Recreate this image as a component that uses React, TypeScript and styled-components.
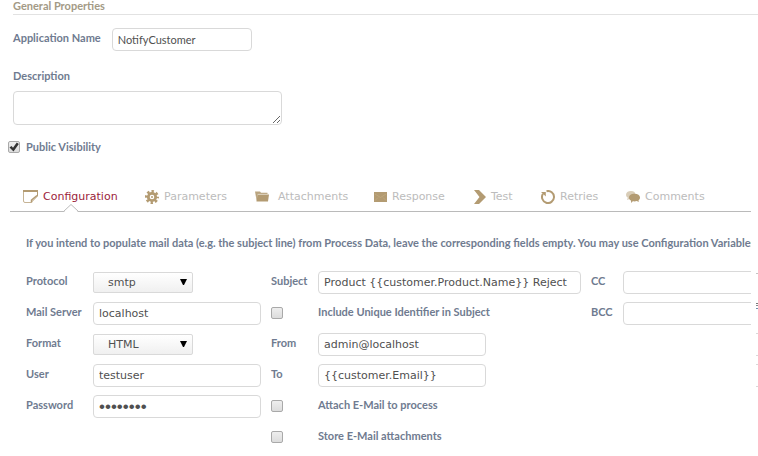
import React from 'react';
import styled, { createGlobalStyle } from 'styled-components';

const Global = createGlobalStyle`
  *, *::before, *::after { box-sizing: border-box; }
  body { margin: 0; background: #fff; font-family: Lato, sans-serif; font-size: 11px; color: #6f7b90; overflow-x: hidden; }
  input, textarea, select, button { font: inherit; margin: 0; }
`;

const Page = styled.main``;

const SectionTitle = styled.h2`
  margin: 0 0 0 13px;
  height: 15px;
  border-bottom: 1px solid #e2e2e2;
  font-size: 11px;
  line-height: 12px;
  font-weight: 700;
  color: #a39a86;
`;

const General = styled.section`
  display: flex;
  flex-direction: column;
  align-items: flex-start;
  padding: 13px 13px 0;
`;

const NameRow = styled.div`
  display: flex;
  gap: 11px;
`;

const Label = styled.label`
  font-size: 11px;
  line-height: 20px;
  font-weight: 700;
  color: #6f7b90;
  white-space: nowrap;
`;

const TextField = styled.input<{ $width?: number; $lato?: boolean }>`
  width: ${(p) => (p.$width ? p.$width + 'px' : '100%')};
  height: 23px;
  padding: 0 5px;
  border: 1px solid #d9d9d9;
  border-radius: 4px;
  background: #fff;
  color: #505050;
  outline: none;
  font-family: ${(p) => (p.$lato ? 'Lato' : '"DejaVu Sans"')}, sans-serif;
  font-size: 11px;
`;

const PasswordField = styled(TextField).attrs({ type: 'password' })`
  font-family: "Liberation Sans", sans-serif;
  font-size: 17px;
`;

const DescriptionLabel = styled(Label)`
  margin-top: 15px;
`;

const DescriptionBox = styled.textarea`
  width: 269px;
  height: 34px;
  margin-top: 5px;
  border: 1px solid #d9d9d9;
  border-radius: 4px;
  outline: none;
`;

const Visibility = styled.div`
  display: flex;
  align-items: center;
  gap: 6px;
  padding: 12px 8px 0;
`;

const CheckBox = styled.input.attrs({ type: 'checkbox' })`
  appearance: none;
  display: grid;
  place-items: center;
  width: 12px;
  height: 12px;
  border: 1px solid #a9a9a9;
  border-radius: 2px;
  background: linear-gradient(#eeeeee, #dcdcdc);
  &:checked::after {
    content: '';
    width: 10px;
    height: 10px;
    background: #333;
    clip-path: polygon(5% 55%, 25% 40%, 40% 58%, 78% 5%, 98% 20%, 45% 95%);
  }
`;

const Tabs = styled.nav`
  display: flex;
  height: 33px;
  margin: 22px 7px 0 10px;
  padding-left: 13px;
  border-bottom: 1px solid #bababa;
`;

const Tab = styled.button<{ $width: number; $gap?: number; $active?: boolean }>`
  position: relative;
  flex: none;
  display: flex;
  align-items: center;
  gap: ${(p) => p.$gap ?? 5}px;
  width: ${(p) => p.$width}px;
  height: 32px;
  padding: 3px 0 0;
  border: 0;
  background: none;
  font-family: "DejaVu Sans", sans-serif;
  font-size: 11px;
  color: ${(p) => (p.$active ? '#9b1c3a' : '#bcbcbc')};
  white-space: nowrap;
`;

const Notch = styled.svg`
  position: absolute;
  left: 40px;
  bottom: -1px;
`;

const Icon = styled.svg`
  flex: none;
  color: #b39b72;
`;

const Body = styled.div`
  display: flex;
  gap: 5px;
`;

const Panel = styled.section`
  flex: 1;
  min-width: 0;
  overflow: hidden;
  padding: 21px 0 0 26px;
`;

const Hint = styled.p`
  margin: 0;
  font-size: 11px;
  line-height: 20px;
  font-weight: 700;
  white-space: nowrap;
`;

const Columns = styled.div`
  display: flex;
  align-items: flex-start;
  gap: 10px;
  margin-top: 18px;
`;

const Fields = styled.div<{ $label: number; $field: number }>`
  flex: none;
  display: grid;
  grid-template-columns: ${(p) => p.$label}px ${(p) => p.$field}px;
  grid-auto-rows: 23px;
  row-gap: 8px;
`;

const Select = styled.select`
  appearance: none;
  display: block;
  width: 100px;
  height: 21px;
  padding: 0 14px;
  border: 1px solid #d9d9d9;
  border-radius: 2px;
  background: linear-gradient(#fff, #f0f0f0);
  color: #505050;
  font-family: "DejaVu Sans", sans-serif;
  font-size: 11px;
`;

const SelectWrap = styled.div`
  position: relative;
  width: 100px;
  padding-top: 1px;
`;

const Arrow = styled.svg`
  position: absolute;
  right: 6px;
  top: 8px;
  pointer-events: none;
`;

const Tick = styled.div`
  padding-top: 5px;
`;

const NextPanel = styled.aside`
  flex: none;
  display: flex;
  flex-direction: column;
  width: 2px;
  padding-top: 61px;
  overflow: hidden;
`;

const Edge = styled.i<{ $below: number; $color?: string }>`
  flex: none;
  height: 1px;
  margin-bottom: ${(p) => p.$below}px;
  background: ${(p) => p.$color ?? '#d9d9d9'};
`;

function Dropdown({ id, value, options }: { id: string; value: string; options: string[] }) {
  return (
    <SelectWrap>
      <Select id={id} defaultValue={value}>
        {options.map((o) => <option key={o}>{o}</option>)}
      </Select>
      <Arrow width="7" height="6"><path d="M0 0h7L4 6H3z" fill="#000" /></Arrow>
    </SelectWrap>
  );
}

const NoteIcon = () => (
  <Icon width="15" height="13" viewBox="0 0 15 13" fill="none" stroke="currentColor">
    <path d="M.5 1.5V11q0 1.5 1.5 1.5h6" strokeOpacity=".75" />
    <path d="M0 1h15" strokeWidth="2" />
    <path d="M14.5 1v5L9 11.5 8.500 12.500" />
    <path d="M8.500 12.500V10l5.500-4.500" strokeWidth="1.500" />
  </Icon>
);

const GearIcon = () => (
  <Icon width="14" height="14" viewBox="0 0 14 14" fill="none" stroke="currentColor">
    <circle cx="7" cy="7" r="5.500" strokeWidth="3" strokeDasharray="2.300 2.020" strokeDashoffset="1.150" />
    <circle cx="7" cy="7" r="3.700" strokeWidth="2.800" />
    <circle cx="7" cy="7" r="1" fill="currentColor" stroke="none" />
  </Icon>
);

const FolderIcon = () => (
  <Icon width="14" height="11" viewBox="0 0 14 11" fill="currentColor">
    <path d="M0 .5h5l1 1.300h6.500V3H3L1.500 9z" opacity=".9" />
    <path d="M1.500 3.500H14L13 10.500H1.500z" />
    <path d="M1.300 8 2.700 3.200H13.500" fill="none" stroke="#d8ccb6" strokeWidth=".5" />
  </Icon>
);

const MailIcon = () => (
  <Icon width="13" height="10" viewBox="0 0 13 10">
    <path d="M0 0h13v10H0z" fill="currentColor" />
    <path d="m1 2 5.500 3.500L12 2M1 8.500l3-3M12 8.500l-3-3" fill="none" stroke="#c6ae83" strokeWidth=".6" />
  </Icon>
);

const ChevronIcon = () => (
  <Icon width="12" height="14" viewBox="0 0 12 14" fill="currentColor">
    <path d="M0 0h5l7 7-7 7H0l5.500-7z" />
  </Icon>
);

const RetryIcon = () => (
  <Icon width="14" height="14" viewBox="0 0 14 14" fill="none" stroke="currentColor">
    <path d="M5.500 1.200A6 6 0 1 1 2 3.700" strokeWidth="2" />
    <path d="M0 2h4.800v4.500L3 4.800z" fill="currentColor" stroke="none" />
  </Icon>
);

const CommentsIcon = () => (
  <Icon width="14" height="12" viewBox="0 0 14 12" fill="currentColor">
    <path d="M5 0C8 0 9.500 1.500 9.500 3.800S7.500 7.500 5 7.500L1 9l.8-2.300C.6 6 0 5 0 3.800 0 1.500 2 0 5 0z" opacity=".5" />
    <path d="M8.500 2.800c3.300 0 5.500 1.500 5.500 3.700 0 1.300-.7 2.300-1.500 2.900l.3 1.500-2-.8c-1.500.5-3 .4-4 .2L5 12l.1-2.300C3.700 9 3 8 3 6.500c0-2.200 2.300-3.700 5.500-3.700z" />
  </Icon>
);

export default function App() {
  return (
    <Page>
      <Global />
      <SectionTitle>General Properties</SectionTitle>
      <General>
        <NameRow>
          <Label htmlFor="name">Application Name</Label>
          <TextField id="name" $width={140} $lato defaultValue="NotifyCustomer" />
        </NameRow>
        <DescriptionLabel htmlFor="description">Description</DescriptionLabel>
        <DescriptionBox id="description" />
      </General>
      <Visibility>
        <CheckBox id="visibility" defaultChecked />
        <Label htmlFor="visibility">Public Visibility</Label>
      </Visibility>
      <Tabs>
        <Tab $active $width={122}>
          <NoteIcon />Configuration
          <Notch width="16" height="8" viewBox="0 0 16 8">
            <path d="M1 8 8 .7 15 8z" fill="#fff" />
            <path d="M.5 7.500 8 .5l7.500 7" fill="none" stroke="#bababa" />
          </Notch>
        </Tab>
        <Tab $width={110}><GearIcon />Parameters</Tab>
        <Tab $width={119} $gap={9}><FolderIcon />Attachments</Tab>
        <Tab $width={100}><MailIcon />Response</Tab>
        <Tab $width={67}><ChevronIcon />Test</Tab>
        <Tab $width={85}><RetryIcon />Retries</Tab>
        <Tab $width={85}><CommentsIcon />Comments</Tab>
      </Tabs>
      <Body>
        <Panel>
          <Hint>If you intend to populate mail data (e.g. the subject line) from Process Data, leave the corresponding fields empty. You may use Configuration Variables</Hint>
          <Columns>
            <Fields $label={67} $field={168}>
              <Label htmlFor="protocol">Protocol</Label>
              <Dropdown id="protocol" value="smtp" options={['smtp', 'smtps']} />
              <Label htmlFor="server">Mail Server</Label>
              <TextField id="server" defaultValue="localhost" />
              <Label htmlFor="format">Format</Label>
              <Dropdown id="format" value="HTML" options={['HTML', 'Text']} />
              <Label htmlFor="user">User</Label>
              <TextField id="user" defaultValue="testuser" />
              <Label htmlFor="password">Password</Label>
              <PasswordField id="password" defaultValue="password" />
            </Fields>
            <Fields $label={47} $field={263}>
              <Label htmlFor="subject">Subject</Label>
              <TextField id="subject" defaultValue="Product {{customer.Product.Name}} Reject" />
              <Tick><CheckBox id="unique" /></Tick>
              <Label htmlFor="unique">Include Unique Identifier in Subject</Label>
              <Label htmlFor="from">From</Label>
              <TextField id="from" $width={168} defaultValue="admin@localhost" />
              <Label htmlFor="to">To</Label>
              <TextField id="to" $width={168} defaultValue="{{customer.Email}}" />
              <Tick><CheckBox id="attach" /></Tick>
              <Label htmlFor="attach">Attach E-Mail to process</Label>
              <Tick><CheckBox id="store" /></Tick>
              <Label htmlFor="store">Store E-Mail attachments</Label>
            </Fields>
            <Fields $label={32} $field={168}>
              <Label htmlFor="cc">CC</Label>
              <TextField id="cc" />
              <Label htmlFor="bcc">BCC</Label>
              <TextField id="bcc" />
            </Fields>
          </Columns>
        </Panel>
        <NextPanel>
          <Edge $below={29} $color="#c4c4c4" />
          <Edge $below={1} $color="#777" />
          <Edge $below={2} $color="#888" />
          <Edge $below={24} $color="#6f8fae" />
          <Edge $below={21} />
          <Edge $below={8} />
          <Edge $below={21} />
          <Edge $below={0} />
        </NextPanel>
      </Body>
    </Page>
  );
}
